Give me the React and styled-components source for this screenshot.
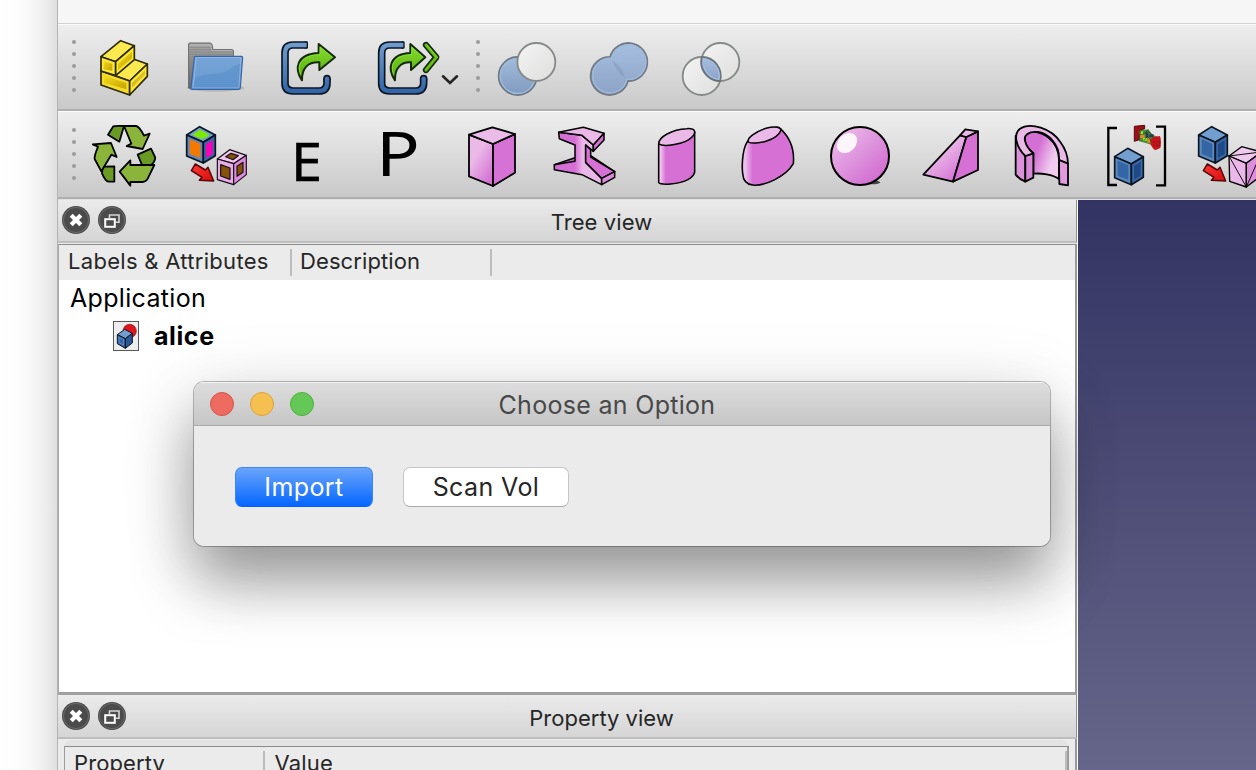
import React from "react";
import styled, { createGlobalStyle } from "styled-components";

const GlobalStyle = createGlobalStyle`
  * { box-sizing: border-box; }
  body { margin: 0; overflow: hidden; background: #fff; font-family: Inter, "Liberation Sans", sans-serif; color: #262626; }
`;

const Screen = styled.div`
  position: relative;
  display: flex;
  width: 1256px;
  height: 770px;
  overflow: hidden;
`;
const Desktop = styled.div`
  flex: none;
  width: 57px;
  background: linear-gradient(90deg, #fff 0%, #fdfdfd 30%, #f6f6f6 60%, #ebebeb 84%, #dfdfdf 100%);
`;
const AppWindow = styled.div`
  flex: 1;
  min-width: 0;
  display: flex;
  flex-direction: column;
  border-left: 1px solid #b4b4b4;
  background: #ebebeb;
`;
const TopStrip = styled.div`
  flex: none;
  height: 24px;
  background: #f6f6f6;
  border-bottom: 1px solid #d2d2d2;
`;
const Toolbar = styled.div`
  flex: none;
  display: flex;
  align-items: center;
  height: ${(p) => p.$height}px;
  padding-top: ${(p) => p.$inset}px;
  border-top: 1px solid #fbfbfb;
  border-bottom: 2px solid #afafaf;
  background: linear-gradient(#eeeeee, #c9c9c9);
`;
const IconGroup = styled.div`
  display: flex;
  gap: 28px;
`;
const GripColumn = styled.div`
  flex: none;
  display: flex;
  flex-direction: column;
  align-items: center;
  gap: 8px;
  width: ${(p) => p.$width}px;
  padding: 0 ${(p) => p.$right}px 4px 0;
`;
const GripDot = styled.i`
  width: 4px;
  height: 4px;
  border-radius: 50%;
  background: #9b9b9b;
`;
const Glyph = styled.svg`
  display: block;
  flex: none;
  width: ${(p) => p.$w || 64}px;
  height: ${(p) => p.$h || 64}px;
`;
const LetterGlyph = styled(Glyph)`
  overflow: visible;
`;
const Workspace = styled.div`
  flex: 1;
  min-height: 0;
  display: flex;
  border-top: 1px solid #e2e2e2;
`;
const DockColumn = styled.div`
  width: 1020px;
  display: flex;
  flex-direction: column;
  border-right: 1px solid #fff;
`;
const Viewport3D = styled.div`
  flex: 1;
  background: linear-gradient(#333363, #66668a);
`;
const DockTitle = styled.div`
  flex: none;
  display: flex;
  align-items: center;
  gap: 8px;
  height: ${(p) => p.$height}px;
  padding: 0 1px 1px 4px;
  border-right: 1px solid #8e8e8e;
  border-bottom: 2px solid #bebebe;
  background: linear-gradient(#ebebeb, #d5d5d5);
`;
const DockName = styled.div`
  flex: 1;
  padding: 4px 0 0 0;
  margin-left: -6px;
  text-align: center;
  font-size: 22px;
  line-height: 28px;
  letter-spacing: ${(p) => p.$track || 0}px;
`;
const TreeFrame = styled.div`
  flex: none;
  height: 451px;
  margin-top: 1px;
  border: solid;
  border-width: 1px 2px 3px 1px;
  border-color: #8c8c8c #999 #a0a0a0 #a8a8a8;
  background: #fff;
`;
const HeaderRow = styled.div`
  display: flex;
  align-items: center;
  height: 35px;
  background: #ebebeb;
`;
const HeaderCell = styled.div`
  width: ${(p) => p.$width}px;
  height: 27px;
  padding-left: ${(p) => p.$pad}px;
  border-right: 2px solid #bcbcbc;
  font-size: 22px;
  line-height: 24px;
  letter-spacing: ${(p) => p.$track || 0}px;
  white-space: nowrap;
`;
const TreeRow = styled.div`
  display: flex;
  align-items: center;
  height: 38px;
  padding: 0 0 2px ${(p) => p.$indent}px;
  gap: 15px;
  color: #000;
  font-size: 25px;
  font-weight: ${(p) => (p.$strong ? 700 : 400)};
  letter-spacing: ${(p) => p.$track || 0}px;
`;
const PropertyArea = styled.div`
  flex: 1;
  padding: 1px 6px 0 6px;
  border-right: 2px solid #999;
`;
const PropertyTab = styled.div`
  height: 60px;
  padding-top: 6px;
  border-radius: 8px 8px 0 0;
  background: #e3e3e3;
`;
const PropertyTable = styled.div`
  height: 54px;
  border: solid #9c9c9c;
  border-width: 1px 2px 0 1px;
  border-top-color: #8c8c8c;
  background: #ebebeb;
`;
const Dialog = styled.div`
  position: absolute;
  left: 194px;
  top: 382px;
  width: 856px;
  height: 164px;
  border-radius: 10px;
  overflow: hidden;
  background: #ebebeb;
`;
const DialogShade = styled.div`
  position: absolute;
  left: 194px;
  top: 382px;
  width: 856px;
  height: 164px;
  border-radius: 10px;
  box-shadow: 0 0 0 1px rgba(0, 0, 0, 0.22), 0 0 2px rgba(0, 0, 0, 0.2), 0 36px 60px rgba(0, 0, 0, 0.36), 0 12px 80px rgba(0, 0, 0, 0.12);
`;
const DialogBar = styled.div`
  display: flex;
  align-items: center;
  gap: 16px;
  height: 44px;
  padding: 0 16px;
  border-top: 1px solid #f2f2f2;
  border-bottom: 1px solid #a9a9a9;
  background: linear-gradient(#dddddd, #c6c6c6);
`;
const Light = styled.span`
  width: 24px;
  height: 24px;
  border-radius: 50%;
  border: 1px solid ${(p) => p.$edge};
  background: ${(p) => p.$fill};
`;
const DialogName = styled.div`
  flex: 1;
  padding-top: 2px;
  margin: 0 106px 0 -44px;
  text-align: center;
  font-size: 25px;
  letter-spacing: 0.3px;
  color: #484848;
`;
const DialogActions = styled.div`
  display: flex;
  gap: 30px;
  padding: 41px;
`;
const Button = styled.button`
  width: ${(p) => p.$width}px;
  height: 40px;
  padding: 0;
  border-radius: 7px;
  font: 25px/38px Inter, sans-serif;
  letter-spacing: 0.4px;
  border: 1px solid ${(p) => (p.$primary ? "#3e86f7" : "#c6c6c6")};
  border-bottom-color: ${(p) => (p.$primary ? "#0a5ff0" : "#aaa")};
  color: ${(p) => (p.$primary ? "#fff" : "#262626")};
  background: ${(p) => (p.$primary ? "linear-gradient(#6aa5fb, #0566ff)" : "#fff")};
`;

const Grip = ({ width, right = 0 }) => (
  <GripColumn $width={width} $right={right}>
    {[0, 1, 2, 3, 4].map((n) => <GripDot key={n} />)}
  </GripColumn>
);

const DefsHolder = styled.svg`
  position: absolute;
`;
const Defs = () => (
  <DefsHolder width="0" height="0">
    <defs>
      <linearGradient id="gold" x1="0" y1="0" x2="1" y2="1"><stop offset="0" stopColor="#b99400" /><stop offset="1" stopColor="#fce94f" /></linearGradient>
      <linearGradient id="goldR" x1="0" y1="0" x2="1" y2="1"><stop offset="0" stopColor="#f3da20" /><stop offset="1" stopColor="#c4a000" /></linearGradient>
      <linearGradient id="steel" gradientUnits="userSpaceOnUse" x1="0" y1="49" x2="0" y2="209"><stop offset="0" stopColor="#729fcf" /><stop offset="1" stopColor="#2f62a6" /></linearGradient>
      <linearGradient id="leaf" x1="0" y1="0" x2="0" y2="1"><stop offset="0" stopColor="#84e030" /><stop offset="1" stopColor="#56a80c" /></linearGradient>
      <linearGradient id="folder" x1="0" y1="0" x2="0" y2="1"><stop offset="0" stopColor="#78a4d6" /><stop offset="1" stopColor="#659ad3" /></linearGradient>
      <linearGradient id="grey" x1="0" y1="0" x2="0" y2="1"><stop offset="0" stopColor="#a8a8a8" /><stop offset="1" stopColor="#696969" /></linearGradient>
      <linearGradient id="pinkD" x1="0.3" y1="0.4" x2="0.75" y2="1"><stop offset="0" stopColor="#eab9e8" /><stop offset="1" stopColor="#d470d3" /></linearGradient>
      <linearGradient id="pinkH" x1="0" y1="0" x2="1" y2="0"><stop offset="0" stopColor="#e6a8e4" /><stop offset="0.05" stopColor="#efc4ed" /><stop offset="0.2" stopColor="#d670d5" /></linearGradient>
      <linearGradient id="beam" x1="0" y1="0" x2="1" y2="0"><stop offset="0.44" stopColor="#d66fd5" /><stop offset="0.6" stopColor="#eab8e8" /></linearGradient>
      <linearGradient id="ball" x1="0.1" y1="0" x2="0.9" y2="0.9"><stop offset="0" stopColor="#edc0eb" /><stop offset="1" stopColor="#d069cf" /></linearGradient>
      <linearGradient id="arch" x1="0" y1="0" x2="1" y2="0.5"><stop offset="0.45" stopColor="#d470d3" /><stop offset="0.9" stopColor="#f0cdee" /></linearGradient>
      <linearGradient id="bool" x1="0" y1="0" x2="0" y2="1"><stop offset="0" stopColor="#a3bddc" /><stop offset="1" stopColor="#8099bf" /></linearGradient>
      <linearGradient id="boolU" x1="0" y1="0" x2="0" y2="1"><stop offset="0" stopColor="#a6bfdf" /><stop offset="1" stopColor="#8ca2c7" /></linearGradient>
      <linearGradient id="pale" x1="0" y1="0" x2="1" y2="1"><stop offset="0" stopColor="#f4f4f4" /><stop offset="1" stopColor="#dededd" /></linearGradient>
      <linearGradient id="redArrow" x1="0" y1="0" x2="1" y2="1"><stop offset="0" stopColor="#ff3838" /><stop offset="1" stopColor="#d50c0c" /></linearGradient>
    </defs>
  </DefsHolder>
);

const K = { stroke: "#000", strokeWidth: 5.4, strokeLinejoin: "round", strokeLinecap: "round" };

const Bricks = () => (
  <Glyph viewBox="126 63 192 192">
    <g stroke="#2e2a05" strokeWidth="5" strokeLinejoin="round">
      <path fill="#fce94f" d="M153 168L196 182L239 198L292 147L252 133L200 166Z" />
      <path fill="#f5dc2a" d="M153 168L239 198V240L153 210Z" />
      <path fill="#fce82f" d="M239 198L292 147V184L239 240Z" />
      <path fill="#fce94f" d="M153 125L212 77L253 92L197 140Z" />
      <path fill="#fce83a" d="M153 125L197 140V182L153 168Z" />
      <path fill="#fce82f" d="M197 140L253 92V134L197 182Z" />
    </g>
    <path fill="url(#goldR)" d="M161 138L187 146V167L161 163Z" />
    <path fill="url(#goldR)" d="M204 146L246 110V130L204 165Z" />
    <path fill="url(#goldR)" d="M162 183L229 204V223L162 203Z" />
    <path fill="url(#gold)" d="M246 204L285 166V180L246 218Z" />
  </Glyph>
);

const Folder = () => (
  <Glyph viewBox="402 63 192 192">
    <ellipse cx="497" cy="219" rx="86" ry="11" fill="#000" opacity="0.13" />
    <path d="M416 219V87Q416 84 420 84H481Q485 84 486 89L489 104H547Q550 104 550 108V200L428 221Z" fill="url(#grey)" stroke="#636363" strokeWidth="3" />
    <path d="M419 90H482L486 107H547" fill="none" stroke="#c6c6c6" strokeWidth="2" />
    <path d="M420 97H484M420 104H486M420 111H546M420 118H546M420 126H432M420 134H432M420 142H432M420 150H430M420 158H430M420 166H430M420 174H428M420 182H428M420 190H428M420 198H426" stroke="#777" strokeWidth="1.5" />
    <path d="M437 124H575Q578 124 578 127L571 218Q570 223 566 223H426Q422 223 423 219L433 127Q434 124 437 124Z" fill="url(#folder)" stroke="#3567a8" strokeWidth="3.5" />
    <path d="M439 128H573L566 218H429Z" fill="none" stroke="#a0c2e7" strokeWidth="2" />
    <path d="M437 187C480 170 515 183 538 163C553 151 563 147 571 147L566 218H430Z" fill="#4d83c3" opacity="0.35" />
  </Glyph>
);

const FRAME = "M125 60H84Q60 60 60 84V175Q60 198 84 198H162Q186 198 186 174V161";
const Frame = () => (
  <g fill="none" strokeLinejoin="round">
    <path d={FRAME} stroke="#0b1521" strokeWidth="23" />
    <circle cx="186" cy="161" r="11.5" fill="#0b1521" />
    <rect x="118" y="48.5" width="11" height="23" rx="4" fill="#0b1521" />
    <path d={FRAME} stroke="url(#steel)" strokeWidth="13" />
    <circle cx="186" cy="161" r="6.5" fill="url(#steel)" />
  </g>
);
const Share = () => (
  <Glyph viewBox="33 33 192 192">
    <Frame />
    <path d="M111 166C88 132 92 87 161 84V57L210 97L163 135V112C130 110 110 128 111 166Z" fill="url(#leaf)" stroke="#15290a" strokeWidth="6" strokeLinejoin="round" />
    <path d="M107 149C94 118 109 91 165 89V66L202 97" fill="none" stroke="#8ae234" strokeWidth="2.5" />
  </Glyph>
);
const ShareAll = () => (
  <Glyph $w={96} viewBox="309 33 288 192">
    <g transform="translate(290 0)">
      <Frame />
      <path d="M100 166C77 132 81 87 146 84V57L191 97L148 135V112C119 110 99 128 100 166Z" fill="url(#leaf)" stroke="#15290a" strokeWidth="6" strokeLinejoin="round" />
      <path d="M96 149C84 118 98 91 150 89V66L184 97" fill="none" stroke="#8ae234" strokeWidth="2.5" />
    </g>
    <g fill="none" strokeLinejoin="miter" strokeLinecap="round">
      <path d="M483 60L514 97L483 135" stroke="#15290a" strokeWidth="19" strokeLinejoin="round" />
      <path d="M483 60L514 97L483 135" stroke="#66bd17" strokeWidth="9" />
      <path d="M486 60L517 97" stroke="#91eb3b" strokeWidth="2" />
    </g>
    <path d="M534 154L555 174L576 154" fill="none" stroke="#242424" strokeWidth="8" strokeLinecap="round" />
  </Glyph>
);

const Cut = () => (
  <Glyph viewBox="75 33 192 192">
    <circle cx="143" cy="153" r="57" fill="url(#bool)" stroke="#6f7780" strokeWidth="5.5" />
    <circle cx="143" cy="153" r="52.5" fill="none" stroke="#9ebde0" strokeWidth="4" />
    <circle cx="199" cy="111" r="57" fill="url(#pale)" stroke="#858a88" strokeWidth="5.5" />
  </Glyph>
);
const Union = () => (
  <Glyph viewBox="75 33 192 192">
    <path d="M144 96A57 57 0 1 1 198 168A57 57 0 1 1 144 96Z" fill="url(#boolU)" stroke="#737a83" strokeWidth="5.5" />
    <path d="M149 100A52 52 0 1 1 195 163A52 52 0 1 1 149 100Z" fill="none" stroke="#9ebbdc" strokeWidth="4" />
    <path d="M155 112Q175 126 186 154Q166 138 155 112Z" fill="#8098ba" stroke="#8098ba" strokeWidth="4" opacity="0.5" />
  </Glyph>
);
const Common = () => (
  <Glyph viewBox="75 33 192 192">
    <circle cx="143" cy="153" r="57" fill="url(#pale)" stroke="#858a88" strokeWidth="5.5" />
    <circle cx="199" cy="111" r="57" fill="url(#pale)" stroke="#858a88" strokeWidth="5.5" />
    <path d="M144 96A57 57 0 0 1 198 168A57 57 0 0 1 144 96Z" fill="url(#boolU)" stroke="#6c737b" strokeWidth="5.5" />
    <path d="M148 101A53 53 0 0 1 195 163A53 53 0 0 1 148 101Z" fill="none" stroke="#a2c0e4" strokeWidth="3.5" />
  </Glyph>
);

const Recycle = () => (
  <Glyph viewBox="126 36 192 192">
    <g {...K}>
      <path fill="#6a9a24" d="M174 68L190 43Q194 41 222 42L208 89Z" />
      <path fill="#8ab43a" d="M222 42H258Q268 43 282 71L299 65L278 111L230 102L244 95Z" />
      <path fill="#6a9a24" d="M263 128L303 110L315 135Q318 145 304 159H276Z" />
      <path fill="#8ab43a" d="M209 179L241 145V159H313L292 202Q286 209 278 210H241V221Z" />
      <path fill="#6a9a24" d="M193 163V209H176Q166 208 156 184L158 164Z" />
      <path fill="#8ab43a" d="M128 97L183 93L200 135L184 128L154 178L134 141Q132 134 144 104Z" />
    </g>
  </Glyph>
);

const RedArrow = () => (
  <path d="M436 156L466 174L474 166L491 207L448 205L456 196L424 176Z" fill="url(#redArrow)" stroke="#560707" strokeWidth="4.5" strokeLinejoin="round" />
);
const BlueCube = ({ top = "#729fcf", left = "#3465a4", right = "#204a87" }) => (
  <g strokeLinejoin="round">
    <path d="M410 69L449 44L496 69L460 91Z" fill="#729fcf" stroke="#0b1521" strokeWidth="5" />
    <path d="M410 69L460 91V153L410 132Z" fill="#5b88c0" stroke="#0b1521" strokeWidth="5" />
    <path d="M460 91L496 69V131L460 153Z" fill="#3867a7" stroke="#0b1521" strokeWidth="5" />
    <path d="M427 68L450 53L479 69L457 82Z" fill={top} />
    <path d="M419 81L451 95V139L419 126Z" fill={left} />
    <path d="M468 97L488 84V126L468 138Z" fill={right} />
  </g>
);
const ColorMap = () => (
  <Glyph viewBox="402 36 192 192">
    <BlueCube top="#7be900" left="#f57900" right="#f900b4" />
    <RedArrow />
    <g stroke="#171017" strokeWidth="3.5" strokeLinejoin="round">
      <path d="M502 141L539 113L589 130L551 155Z" fill="#efc6ed" />
      <path d="M502 141L551 155V218L502 203Z" fill="#e7ace5" />
      <path d="M551 155L589 130V188L551 218Z" fill="#dd8bdb" />
      <path d="M527 134L543 124L565 131L549 143Z" fill="#845209" />
      <path d="M512 158L540 168V202L512 192Z" fill="#845209" />
      <path d="M561 163L579 151V181L561 193Z" fill="#845209" />
    </g>
  </Glyph>
);
const LetterE = () => (
  <LetterGlyph viewBox="276 124 64 64">
    <text transform="translate(290.8 180.5) scale(1.06 1)" fontFamily="Noto Sans, sans-serif" fontSize="53.5" fill="#000" stroke="#000" strokeWidth="0.3">E</text>
  </LetterGlyph>
);
const LetterP = () => (
  <LetterGlyph viewBox="368 124 64 64">
    <text transform="translate(376 176.3) scale(1.16 1)" fontFamily="Noto Sans, sans-serif" fontSize="62.5" fill="#000">P</text>
  </LetterGlyph>
);
const BoxSolid = () => (
  <Glyph viewBox="570 36 192 192">
    <g {...K}>
      <path fill="url(#pinkD)" d="M597 68L669 96V222L597 193Z" />
      <path fill="#d672d5" d="M669 96L735 66V182L669 222Z" />
      <path fill="#ebbbe9" d="M597 68L667 46L735 66L669 96Z" />
    </g>
  </Glyph>
);
const Beam = () => (
  <Glyph viewBox="66 36 192 192">
    <g {...K} strokeWidth="4.6">
      <path fill="#c75fc6" d="M73 158L135 137L183 132L254 179L215 199Z" />
      <path fill="url(#beam)" d="M86 61L156 70L190 99V118L167 99V151L215 199V218L156 188L73 173V158L135 148V99L88 80Z" />
      <path fill="#d670d5" d="M167 99L182 113V135L254 179L215 199L167 151Z" />
      <path fill="#eab9e8" d="M86 61L160 46L222 64L190 99L156 70Z" />
      <path fill="#d670d5" d="M222 64V84L190 118V99Z" />
      <path fill="#dd8cdb" d="M254 179V196L215 218V199Z" />
    </g>
  </Glyph>
);
const EllipticCylinder = () => (
  <Glyph viewBox="342 36 192 192">
    <g {...K} strokeWidth="4.6">
      <path fill="url(#pinkH)" d="M386 95V211C391 220 446 218 475 202Q490 194 494 181V60Z" />
      <path fill="#eab9e8" d="M386 95C386 76 425 52 470 50C498 48 499 62 486 75C465 98 398 106 386 95Z" />
    </g>
  </Glyph>
);
const TaperedSolid = () => (
  <Glyph viewBox="618 36 192 192">
    <g {...K} strokeWidth="4.6">
      <path fill="url(#pinkH)" d="M655 86C640 100 634 151 638 184Q640 216 668 219C705 223 768 193 790 155C794 112 779 76 751 50Z" />
      <path fill="#eab9e8" d="M655 90C650 78 674 60 708 49C735 41 755 45 752 56C747 70 730 80 710 87C690 94 662 95 655 90Z" />
    </g>
  </Glyph>
);
const Sphere = () => (
  <Glyph viewBox="54 36 192 192">
    <ellipse cx="186" cy="211" rx="25" ry="6" fill="#454545" />
    <circle cx="150" cy="132" r="87" fill="url(#ball)" stroke="#000" strokeWidth="6" />
    <ellipse cx="111" cy="93" rx="34" ry="26" transform="rotate(-45 111 93)" fill="#fcf6fc" />
  </Glyph>
);
const Wedge = () => (
  <Glyph viewBox="330 36 192 192">
    <g {...K}>
      <path fill="url(#pinkD)" d="M340 188L450 70L469 75L429 209Z" />
      <path fill="#d670d5" d="M469 75L504 58V174L429 209Z" />
      <path fill="#eab9e8" d="M450 70L466 52L504 58L469 75Z" />
    </g>
  </Glyph>
);
const Arch = () => (
  <Glyph viewBox="606 36 192 192">
    <g {...K}>
      <path fill="url(#arch)" d="M644 77C648 52 690 55 717 78C745 101 747 127 747 145V201C728 187 693 183 670 185V123Q642 105 644 77Z" />
      <path fill="#dc92da" d="M617 72V188Q628 202 646 209V132Q625 110 617 72Z" />
      <path fill="#d987d8" d="M646 132L670 124V197L646 209Z" />
      <path fill="#eab9e8" d="M646 132C617 103 610 67 629 51C661 29 724 49 751 90Q773 119 774 155L747 144C750 97 715 65 684 60C655 57 641 70 645 86Q650 107 670 124Z" />
      <path fill="#e09ade" d="M747 144L774 155V220L748 216Z" />
    </g>
  </Glyph>
);
const BracketGroup = () => (
  <Glyph viewBox="72 36 192 192">
    <path d="M111 48H85V219H111M228 44H255V220H228" fill="none" stroke="#000" strokeWidth="7" />
    <g transform="translate(-306 65)"><BlueCube /></g>
    <path d="M163 43L194 40V50L180 55L176 84L163 88Z" fill="#9d1015" stroke="#5a080b" strokeWidth="3" />
    <path d="M180 55L205 52L217 68L242 78L213 98L194 92L177 88Z" fill="#4c8a36" />
    <path d="M179 58h10v8h-10zM189 78h12v8h-12z" fill="#8ae234" />
    <path d="M180 69h14v9h-14zM202 79h8v13h-8z" fill="#e08a22" />
    <path d="M197 61h8v15h-8zM208 67h13v9h-13z" fill="#243c5c" />
    <path d="M218 76L240 72L242 81L243 92L241 108L225 115L218 108L212 98L211 84Z" fill="#d3151b" />
    <path d="M222 76v33M231 74v38M239 78v28M214 90h27M218 100h25" stroke="#7b1115" strokeWidth="1.5" />
    <path d="M194 48L181 57L178 86M190 66L203 56L217 69M191 86L203 73L215 88" fill="none" stroke="#20301a" strokeWidth="2" />
  </Glyph>
);
const MeshConvert = () => (
  <Glyph viewBox="348 36 192 192">
    <g transform="translate(-54 0)"><BlueCube /><RedArrow /></g>
    <g {...K} strokeWidth="4">
      <path fill="#efc9ee" d="M447 132L485 104L545 120L499 154Z" />
      <path fill="#eab8e8" d="M447 132L499 154V225L449 208Z" />
      <path fill="#dc8edb" d="M499 154L545 120V190L499 225Z" />
      <path fill="none" strokeWidth="2.8" d="M447 132L535 121M447 132L499 225M499 225L545 120" />
    </g>
  </Glyph>
);

const CloseDot = () => (
  <Glyph $w={28} $h={28} viewBox="0 0 28 28">
    <circle cx="14" cy="14" r="14" fill="#4b4b4b" />
    <circle cx="14" cy="14" r="12.6" fill="none" stroke="#6b6b6b" />
    <path d="M9.2 9.2L18.8 18.8M18.8 9.2L9.2 18.8" stroke="#fff" strokeWidth="4.2" />
  </Glyph>
);
const FloatDot = () => (
  <Glyph $w={28} $h={28} viewBox="0 0 28 28">
    <circle cx="14" cy="14" r="14" fill="#4b4b4b" />
    <circle cx="14" cy="14" r="12.6" fill="none" stroke="#6b6b6b" />
    <path d="M11.5 12V9H21V16.2H18" fill="none" stroke="#d6d6d6" strokeWidth="1.6" />
    <rect x="7.2" y="13.2" width="9.6" height="7.6" fill="#4b4b4b" stroke="#fff" strokeWidth="2" />
  </Glyph>
);
const DocumentIcon = () => (
  <Glyph $w={26} $h={30} viewBox="190 378 78 90">
    <rect x="191.5" y="379.5" width="75" height="87" fill="#ededed" stroke="#585858" strokeWidth="3" />
    <circle cx="240" cy="408" r="20" fill="#e0161c" stroke="#7b0c0f" strokeWidth="2" />
    <g stroke="#0b1521" strokeWidth="3" strokeLinejoin="round">
      <path d="M203 419L225 403L248 415L227 431Z" fill="#729fcf" />
      <path d="M203 419L227 431V460L203 446Z" fill="#3465a4" />
      <path d="M227 431L248 415V444L227 460Z" fill="#2b5795" />
    </g>
    <path d="M208 427L222 434V450L208 443Z" fill="none" stroke="#6d9bd0" strokeWidth="2" />
  </Glyph>
);

export default function App() {
  return (
    <Screen>
      <GlobalStyle />
      <Defs />
      <Desktop />
      <AppWindow>
        <TopStrip />
        <Toolbar $height={87} $inset={2}>
          <Grip width={34} right={2} />
          <IconGroup><Bricks /><Folder /><Share /><ShareAll /></IconGroup>
          <Grip width={31} right={3} />
          <IconGroup><Cut /><Union /><Common /></IconGroup>
        </Toolbar>
        <Toolbar $height={88} $inset={3}>
          <Grip width={34} right={2} />
          <IconGroup>
            <Recycle /><ColorMap /><LetterE /><LetterP /><BoxSolid /><Beam /><EllipticCylinder />
            <TaperedSolid /><Sphere /><Wedge /><Arch /><BracketGroup /><MeshConvert />
          </IconGroup>
        </Toolbar>
        <Workspace>
          <DockColumn>
            <DockTitle $height={43}>
              <CloseDot /><FloatDot />
              <DockName $track={0.1}>Tree view</DockName>
            </DockTitle>
            <TreeFrame>
              <HeaderRow>
                <HeaderCell $width={233} $pad={9} $track={0.3}>Labels &amp; Attributes</HeaderCell>
                <HeaderCell $width={200} $pad={8} $track={0.1}>Description</HeaderCell>
              </HeaderRow>
              <TreeRow $indent={11} $track={0.32}>Application</TreeRow>
              <TreeRow $indent={54} $track={0.6} $strong><DocumentIcon />alice</TreeRow>
            </TreeFrame>
            <DockTitle $height={44}>
              <CloseDot /><FloatDot />
              <DockName>Property view</DockName>
            </DockTitle>
            <PropertyArea>
              <PropertyTab>
                <PropertyTable>
                  <HeaderRow>
                    <HeaderCell $width={201} $pad={9} $track={0.1}>Property</HeaderCell>
                    <HeaderCell $width={804} $pad={9} $track={0.2}>Value</HeaderCell>
                  </HeaderRow>
                </PropertyTable>
              </PropertyTab>
            </PropertyArea>
          </DockColumn>
          <Viewport3D />
        </Workspace>
      </AppWindow>
      <DialogShade />
      <Dialog>
        <DialogBar>
          <Light $fill="#ed6b60" $edge="#d5534a" />
          <Light $fill="#f5c04f" $edge="#dba23c" />
          <Light $fill="#64c856" $edge="#4fae41" />
          <DialogName>Choose an Option</DialogName>
        </DialogBar>
        <DialogActions>
          <Button $primary $width={138}>Import</Button>
          <Button $width={166}>Scan Vol</Button>
        </DialogActions>
      </Dialog>
    </Screen>
  );
}
